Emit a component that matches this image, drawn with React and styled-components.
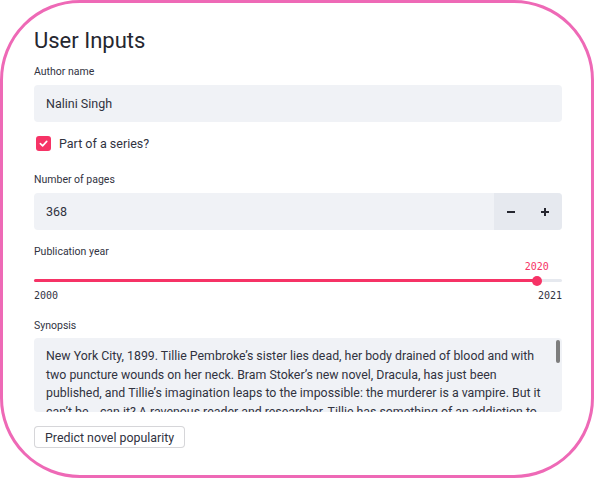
import React from 'react';
import styled, { createGlobalStyle } from 'styled-components';

const Global = createGlobalStyle`
  html, body { margin: 0; padding: 0; background: #ffffff; }
  body { font-family: Roboto, "Noto Sans", sans-serif; color: #31333f; }
  * { box-sizing: border-box; }
`;

const PINK = '#f63366';

const Frame = styled.div`
  width: 594px;
  height: 478px;
  border: 3px solid #ee69b6;
  border-radius: 80px;
  padding: 24px 29px 0 31px;
  display: flex;
  flex-direction: column;
  overflow: hidden;
`;

const Title = styled.h2`
  margin: 0;
  font-size: 22px;
  font-weight: 400;
  line-height: 28px;
  color: #262730;
`;

const Label = styled.div`
  font-size: 10.5px;
  line-height: 14px;
  color: #31333f;
  margin-top: ${p => p.$mt}px;
  margin-bottom: ${p => p.$mb ?? 6}px;
`;

const TextInput = styled.div`
  height: 37px;
  background: #f0f2f6;
  border-radius: 4px;
  display: flex;
  align-items: center;
  padding-left: 12px;
  font-size: 12.5px;
  color: #31333f;
`;

const CheckRow = styled.label`
  margin-top: 13px;
  height: 16px;
  display: flex;
  align-items: center;
  gap: 8px;
  padding-left: 2px;
  font-size: 12.5px;
  color: #31333f;
`;

const CheckBox = styled.span`
  width: 15px;
  height: 15px;
  border-radius: 3px;
  background: ${PINK};
  display: flex;
  align-items: center;
  justify-content: center;
`;

const NumberInput = styled.div`
  height: 37px;
  display: flex;
  border-radius: 4px;
  overflow: hidden;
  background: #f0f2f6;
`;

const NumberValue = styled.div`
  flex: 1;
  display: flex;
  align-items: center;
  padding-left: 12px;
  font-size: 12.5px;
  color: #31333f;
`;

const Stepper = styled.div`
  width: 68px;
  display: flex;
  background: #e6e9ef;
`;

const StepButton = styled.div`
  flex: 1;
  display: flex;
  align-items: center;
  justify-content: center;
`;

const SliderBlock = styled.div`
  display: flex;
  flex-direction: column;
  margin-top: -6px;
`;

const TrackArea = styled.div`
  position: relative;
  height: 42px;
  padding-top: 20px;
`;

const Track = styled.div`
  height: 3px;
  border-radius: 2px;
  background: #e6e9ef;
  position: relative;
`;

const Fill = styled.div`
  height: 100%;
  border-radius: 2px;
  background: ${PINK};
`;

const Thumb = styled.div`
  position: absolute;
  top: 50%;
  width: 10px;
  height: 10px;
  border-radius: 50%;
  background: ${PINK};
  transform: translate(-50%, -50%);
`;

const ThumbValue = styled.div`
  position: absolute;
  top: -19px;
  transform: translateX(-50%);
  font-family: "DejaVu Sans Mono", "Liberation Mono", monospace;
  font-size: 10px;
  line-height: 14px;
  color: ${PINK};
`;

const TickRow = styled.div`
  display: flex;
  justify-content: space-between;
  font-family: "DejaVu Sans Mono", "Liberation Mono", monospace;
  font-size: 10px;
  line-height: 14px;
  color: #31333f;
  margin-top: -12px;
`;

const TextArea = styled.div`
  position: relative;
  height: 74px;
  background: #f0f2f6;
  border-radius: 4px;
  overflow: hidden;
  padding: 9px 14px 0 12px;
  font-size: 12.35px;
  line-height: 18.5px;
  color: #31333f;
`;

const ScrollThumb = styled.div`
  position: absolute;
  right: 2px;
  top: 2px;
  width: 4px;
  height: 23px;
  border-radius: 2px;
  background: #7d7d7d;
`;

const Line = styled.div`
  white-space: nowrap;
`;

const Button = styled.button`
  align-self: flex-start;
  margin-top: 14px;
  height: 22px;
  padding: 0 10px;
  background: #ffffff;
  border: 1px solid rgba(49, 51, 63, 0.2);
  border-radius: 4px;
  font-family: inherit;
  font-size: 12.4px;
  color: #31333f;
  display: flex;
  align-items: center;
`;

const synopsis = [
  'New York City, 1899. Tillie Pembroke’s sister lies dead, her body drained of blood and with',
  'two puncture wounds on her neck. Bram Stoker’s new novel, Dracula, has just been',
  'published, and Tillie’s imagination leaps to the impossible: the murderer is a vampire. But it',
  'can’t be… can it? A ravenous reader and researcher, Tillie has something of an addiction to',
];

export default function App() {
  const min = 2000, max = 2021, value = 2020;
  const pct = ((value - min) / (max - min)) * 100;
  return (
    <>
      <Global />
      <Frame>
        <Title>User Inputs</Title>

        <Label $mt={10}>Author name</Label>
        <TextInput>Nalini Singh</TextInput>

        <CheckRow>
          <CheckBox>
            <svg width="9" height="9" viewBox="0 0 10 10">
              <path d="M1.5 5.2 L4 7.6 L8.6 2.6" fill="none" stroke="#fff" strokeWidth="1.8" strokeLinecap="round" strokeLinejoin="round" />
            </svg>
          </CheckBox>
          Part of a series?
        </CheckRow>

        <Label $mt={22}>Number of pages</Label>
        <NumberInput>
          <NumberValue>368</NumberValue>
          <Stepper>
            <StepButton>
              <svg width="8" height="8" viewBox="0 0 8 8"><rect x="0" y="3" width="8" height="2" fill="#262730" /></svg>
            </StepButton>
            <StepButton>
              <svg width="8" height="8" viewBox="0 0 8 8"><rect x="0" y="3" width="8" height="2" fill="#262730" /><rect x="3" y="0" width="2" height="8" fill="#262730" /></svg>
            </StepButton>
          </Stepper>
        </NumberInput>

        <Label $mt={15}>Publication year</Label>
        <SliderBlock>
          <TrackArea>
            <Track>
              <Fill style={{ width: `${pct}%` }} />
              <Thumb style={{ left: `${pct}%` }} />
              <ThumbValue style={{ left: `${pct}%` }}>{value}</ThumbValue>
            </Track>
          </TrackArea>
          <TickRow>
            <span>{min}</span>
            <span>{max}</span>
          </TickRow>
        </SliderBlock>

        <Label $mt={16} $mb={5}>Synopsis</Label>
        <TextArea>
          {synopsis.map((l, i) => <Line key={i}>{l}</Line>)}
          <ScrollThumb />
        </TextArea>

        <Button>Predict novel popularity</Button>
      </Frame>
    </>
  );
}
